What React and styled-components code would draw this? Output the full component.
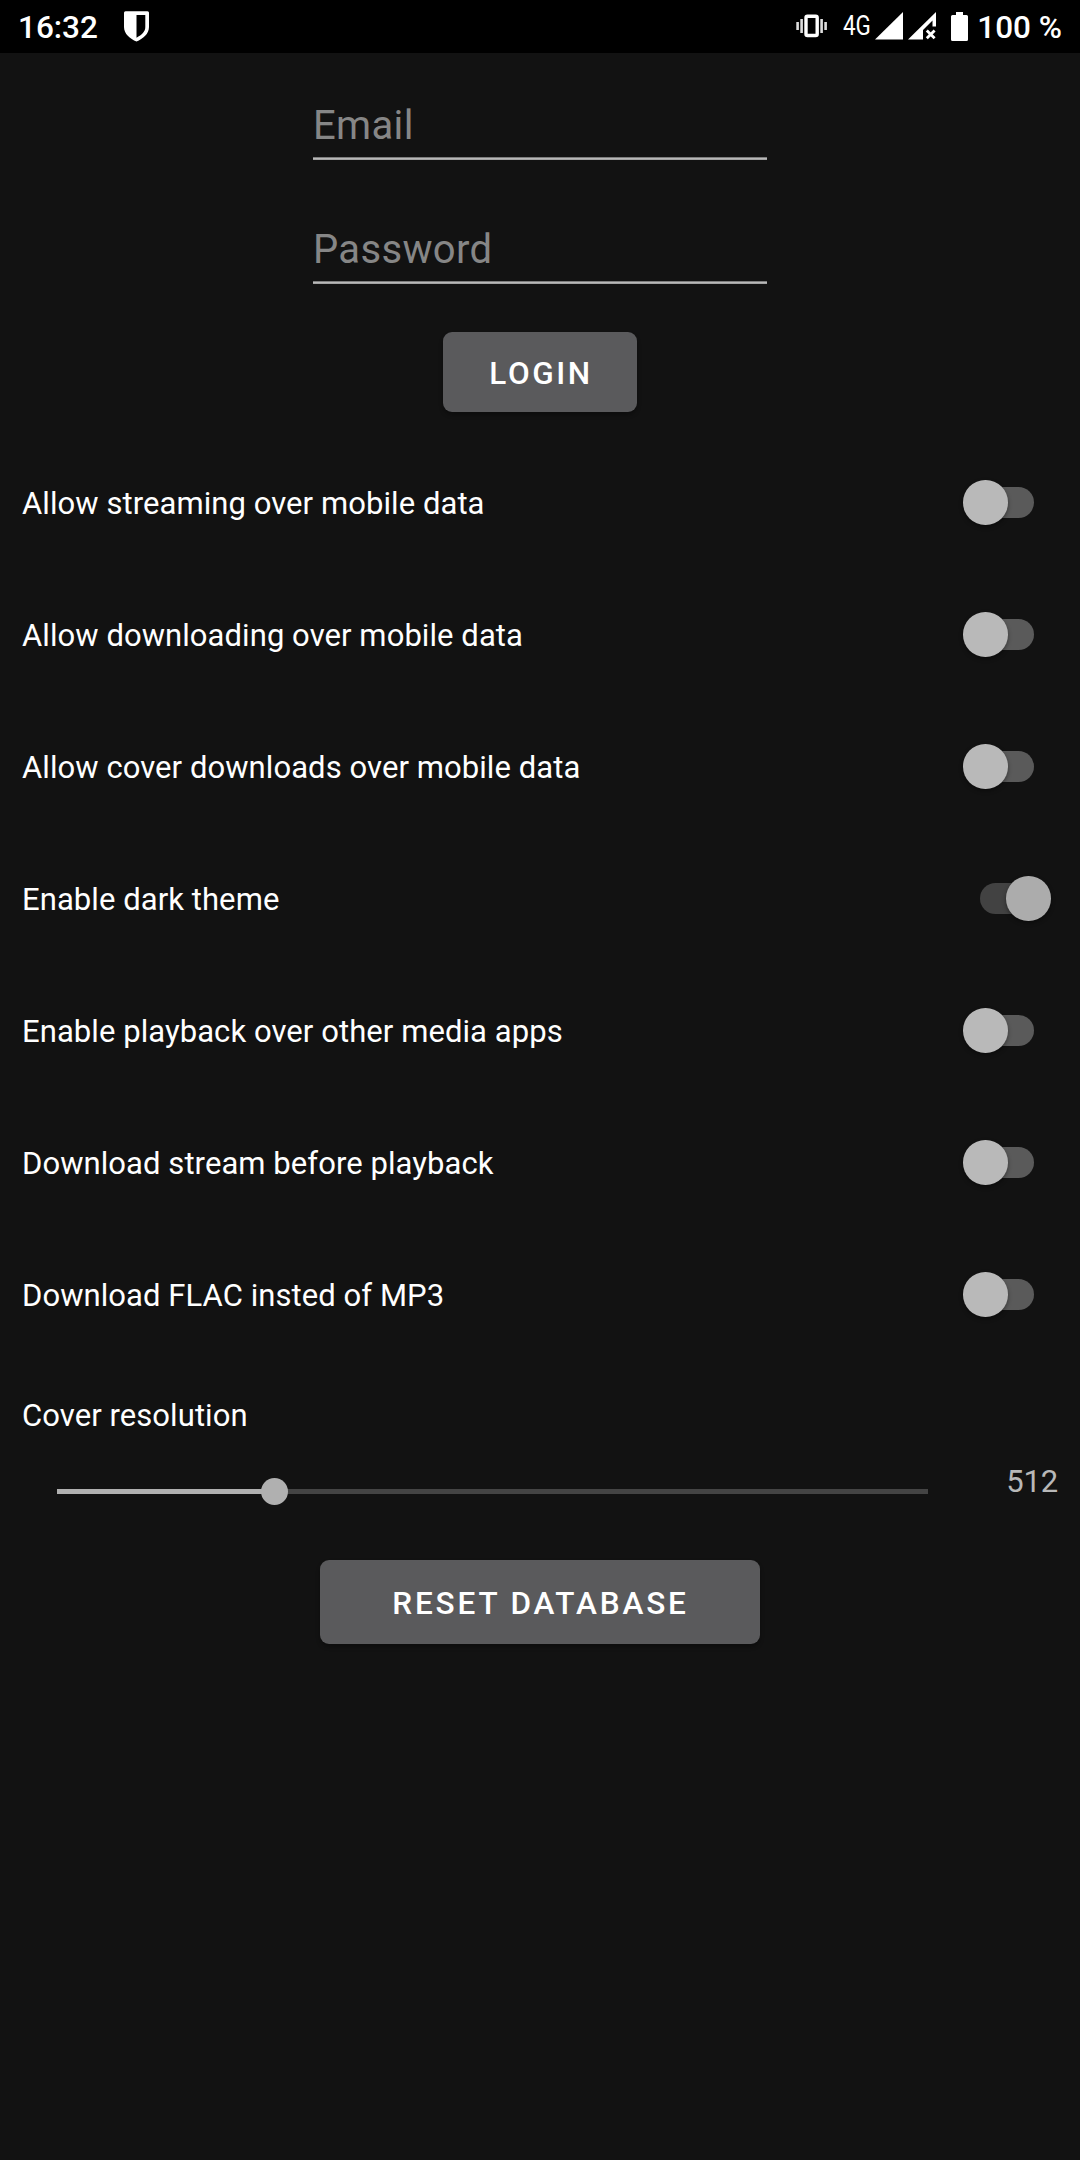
import React, { useState } from "react";
import styled, { createGlobalStyle } from "styled-components";

const GlobalStyle = createGlobalStyle`
  html, body { margin: 0; background: #121212; }
  * { box-sizing: border-box; }
  body, input, button { font-family: Roboto, "Noto Sans", sans-serif; }
`;

const Screen = styled.div`
  width: 1080px;
  height: 2160px;
  display: flex;
  flex-direction: column;
  background: #121212;
  color: #fff;
  font-size: 31px;
  letter-spacing: 0.07px;
  overflow: hidden;
`;

const StatusBar = styled.header`
  height: 53px;
  flex: none;
  display: flex;
  align-items: flex-start;
  justify-content: space-between;
  padding: 0 18px;
  background: #000;
  letter-spacing: 0;
`;

const StatusGroup = styled.div`
  display: flex;
  align-items: flex-start;
  height: 53px;
`;

const StatusText = styled.span`
  font-size: 31.5px;
  font-weight: 500;
  line-height: 56px;
  white-space: pre;
`;

const Network = styled.span`
  display: block;
  width: 28px;
  margin: 0 4px 0 15px;
  font-size: 27px;
  line-height: 52px;
  transform: scaleX(0.83);
  transform-origin: left;
`;

const Icon = styled.svg`
  display: block;
  flex: none;
  height: 53px;
  width: ${(p) => p.$width}px;
  margin-left: ${(p) => p.$gap || 0}px;
`;

const LoginForm = styled.form`
  display: flex;
  flex-direction: column;
  align-items: center;
  padding-top: 47px;
`;

const Field = styled.input`
  width: 454px;
  height: 60px;
  margin-bottom: 64px;
  padding: 0 0 10px 0;
  border: 0;
  border-radius: 0;
  outline: 0;
  background: linear-gradient(#7d7d7d 0 1px, #b8b8b8 1px 2px, #a2a2a2 2px 3px) bottom / 100% 3px no-repeat;
  color: #fff;
  font-size: 40px;
  line-height: 50px;
  letter-spacing: 0.35px;
  &::placeholder { color: #868686; opacity: 1; }
`;

const Button = styled.button`
  width: ${(p) => p.$width}px;
  height: ${(p) => p.$height}px;
  padding: 2px 0 0 1px;
  border: 0;
  border-radius: 9px;
  background: #5a5a5c;
  color: #fff;
  font-size: 31.5px;
  font-weight: 500;
  letter-spacing: 2.85px;
  box-shadow: 0 3px 4px rgba(0, 0, 0, 0.3);
`;

const LoginButton = styled(Button)`
  margin-top: -16px;
  padding-left: 2px;
  letter-spacing: 2.6px;
`;

const Options = styled.div`
  display: flex;
  flex-direction: column;
  margin-top: 25px;
`;

const Option = styled.label`
  display: flex;
  align-items: center;
  justify-content: space-between;
  height: 132px;
  padding: 0 28px 0 22px;
`;

const Switch = styled.span`
  display: flex;
  align-items: center;
  justify-content: ${(p) => (p.$on ? "flex-end" : "flex-start")};
  width: 89px;
  height: 46px;
  isolation: isolate;
  position: relative;
  &::before {
    content: "";
    position: absolute;
    z-index: -1;
    left: 17px;
    top: 7px;
    width: 54px;
    height: 31px;
    border-radius: 16px;
    background: ${(p) => (p.$on ? "#424242" : "#5a5a5a")};
  }
`;

const Knob = styled.span`
  width: 44.5px;
  height: 44.5px;
  margin: 0 1.5px 1px 0;
  border-radius: 50%;
  background: ${(p) => (p.$on ? "#acacac" : "#b9b9b9")};
  box-shadow: 0 2px 4px rgba(0, 0, 0, 0.4);
`;

const Resolution = styled.section`
  display: flex;
  flex-direction: column;
  padding: 36px 22px 0;
`;

const ResolutionTitle = styled.div`
  line-height: 38px;
`;

const SliderRow = styled.div`
  display: flex;
  justify-content: space-between;
  align-items: center;
  height: 60px;
  margin-top: 26px;
`;

const Track = styled.div`
  display: flex;
  align-items: center;
  width: 871px;
  height: 29px;
  margin-left: 35px;
  background: linear-gradient(#444 0 0) center / 100% 5px no-repeat;
`;

const TrackFill = styled.div`
  height: 5px;
  background: #b0b0b0;
`;

const Thumb = styled.div`
  width: 27px;
  height: 27px;
  margin-left: -13.5px;
  margin-top: 1px;
  border-radius: 50%;
  background: #b0b0b0;
`;

const ResolutionValue = styled.span`
  color: #b8b8b8;
  line-height: 38px;
  margin-bottom: 18px;
  letter-spacing: -0.2px;
`;

const Footer = styled.div`
  display: flex;
  justify-content: center;
  margin-top: 39px;
`;

const settings = [
  ["Allow streaming over mobile data", false],
  ["Allow downloading over mobile data", false],
  ["Allow cover downloads over mobile data", false],
  ["Enable dark theme", true],
  ["Enable playback over other media apps", false],
  ["Download stream before playback", false],
  ["Download FLAC insted of MP3", false],
];

function ShieldIcon() {
  return (
    <Icon $width={26} $gap={26} viewBox="0 0 26 53">
      <path fillRule="evenodd" fill="#fff" d="M1.500 11.300H23.500Q25 11.300 25 12.800V27C25 34 19 38.800 12.500 41.500C6 38.800 0 34 0 27V12.800Q0 11.300 1.500 11.300ZM12.500 15V37.700C18 34.800 21.300 31.500 21.300 27V15Z" />
    </Icon>
  );
}

function VibrateIcon() {
  return (
    <Icon $width={32} viewBox="0 0 32 53">
      <rect x="10" y="16.200" width="11.200" height="19.300" rx="1.500" fill="none" stroke="#fff" strokeWidth="3.400" />
      <path d="M5.600 19V33M1.600 22V30M25.600 19V33M29.600 22V30" stroke="#ddd" strokeWidth="2.600" />
    </Icon>
  );
}

function SignalIcon() {
  return (
    <Icon $width={28} viewBox="0 0 28 53">
      <path d="M0 39.500L28 12V39.500Z" fill="#fff" />
    </Icon>
  );
}

function NoSignalIcon() {
  return (
    <Icon $width={28} $gap={5} viewBox="0 0 28 53">
      <path d="M0 39.500L28 12V26.500H24.500V20.500L15 30V39.500Z" fill="#fff" />
      <path d="M18.800 30.500L26.600 38.300M26.600 30.500L18.800 38.300" stroke="#fff" strokeWidth="2.800" />
    </Icon>
  );
}

function BatteryIcon() {
  return (
    <Icon $width={18} $gap={15} viewBox="0 0 18 53">
      <path d="M5 12H12V15H15.500Q17 15 17 16.500V39.500Q17 41 15.500 41H1.500Q0 41 0 39.500V16.500Q0 15 1.500 15H5Z" fill="#fff" />
    </Icon>
  );
}

export default function App() {
  const [resolution] = useState(512);
  return (
    <>
      <GlobalStyle />
      <Screen>
        <StatusBar>
          <StatusGroup>
            <StatusText>16:32</StatusText>
            <ShieldIcon />
          </StatusGroup>
          <StatusGroup>
            <VibrateIcon />
            <Network>4G</Network>
            <SignalIcon />
            <NoSignalIcon />
            <BatteryIcon />
            <StatusText>{" 100 %"}</StatusText>
          </StatusGroup>
        </StatusBar>

        <LoginForm>
          <Field placeholder="Email" />
          <Field type="password" placeholder="Password" />
          <LoginButton type="button" $width={194} $height={80}>LOGIN</LoginButton>
        </LoginForm>

        <Options>
          {settings.map(([label, on]) => (
            <Option key={label}>
              <span>{label}</span>
              <Switch $on={on}><Knob $on={on} /></Switch>
            </Option>
          ))}
        </Options>

        <Resolution>
          <ResolutionTitle>Cover resolution</ResolutionTitle>
          <SliderRow>
            <Track>
              <TrackFill style={{ width: `${(resolution / 2048) * 100}%` }} />
              <Thumb />
            </Track>
            <ResolutionValue>{resolution}</ResolutionValue>
          </SliderRow>
        </Resolution>

        <Footer>
          <Button $width={440} $height={84}>RESET DATABASE</Button>
        </Footer>
      </Screen>
    </>
  );
}
